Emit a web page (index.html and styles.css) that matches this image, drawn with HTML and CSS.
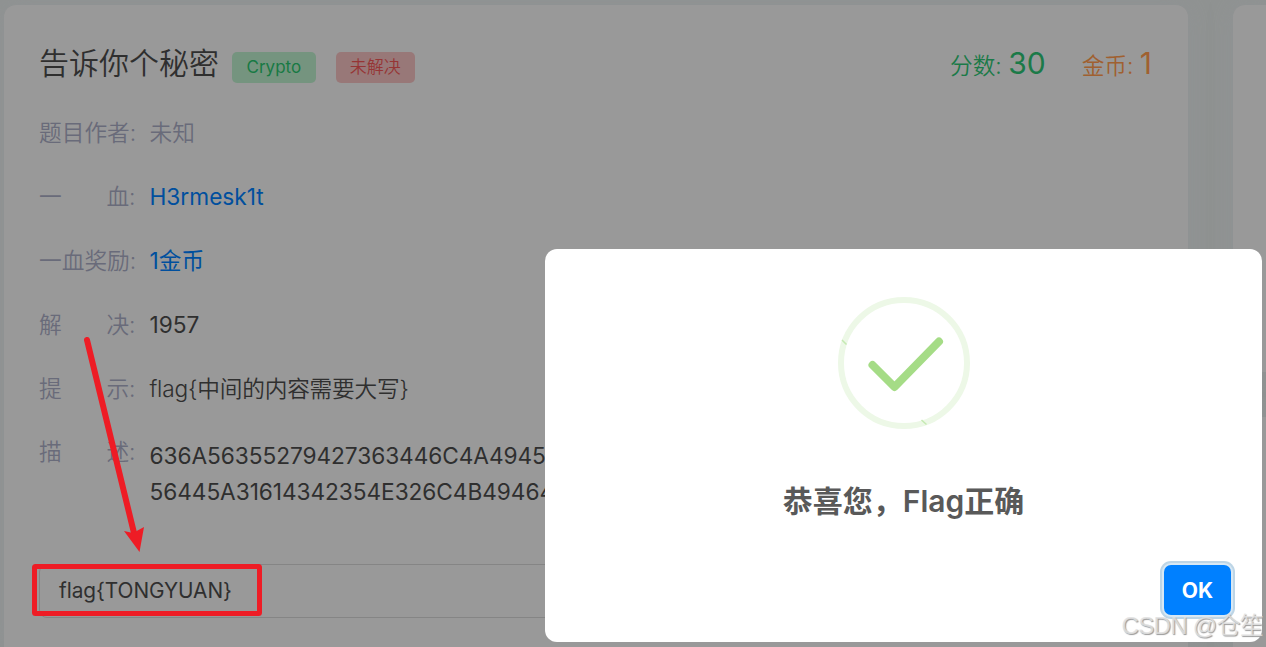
FILE: index.html
```html
<!DOCTYPE html>
<html lang="zh-CN">
<head>
    <meta charset="UTF-8">
    <meta name="viewport" content="width=device-width, initial-scale=1.0">
    <title>告诉你个秘密</title>
    <link rel="stylesheet" href="styles.css">
</head>
<body>
    <div class="page">
        <main class="card challenge">
            <header class="challenge-header">
                <h1 class="title">告诉你个秘密</h1>
                <span class="badge badge-success">Crypto</span>
                <span class="badge badge-danger">未解决</span>
                <div class="scores">
                    <span class="score">分数: <b>30</b></span>
                    <span class="coin">金币: <b>1</b></span>
                </div>
            </header>

            <div class="row"><div class="label"><span>题</span><span>目</span><span>作</span><span>者:</span></div><span class="muted">未知</span></div>
            <div class="row"><div class="label"><span>一</span><span>血:</span></div><a class="link">H3rmesk1t</a></div>
            <div class="row"><div class="label"><span>一</span><span>血</span><span>奖</span><span>励:</span></div><a class="link">1金币</a></div>
            <div class="row"><div class="label"><span>解</span><span>决:</span></div><span class="value">1957</span></div>
            <div class="row"><div class="label"><span>提</span><span>示:</span></div><span class="hint">flag{中间的内容需要大写}</span></div>
            <div class="row row-desc"><div class="label"><span>描</span><span>述:</span></div><p class="desc">636A56355279427363446C4A4945<br>56445A31614342354E326C4B49464</p></div>

            <div class="flag-input">flag{TONGYUAN}</div>
        </main>
        <aside class="side">
            <div class="card side-top"></div>
            <div class="card side-bottom"></div>
        </aside>
    </div>

    <!-- arrow and box marking the flag -->
    <svg class="marks" width="300" height="647" viewBox="0 0 300 647">
        <path d="M87 340L134.500 535" fill="none" stroke="#ee1c25" stroke-width="6" stroke-linecap="round"/>
        <path d="M124 531L133 533L144 527L139.500 552Z" fill="#ee1c25"/>
        <rect x="34.500" y="566.500" width="225" height="47" rx="1" fill="none" stroke="#ee1c25" stroke-width="5"/>
    </svg>

    <div class="modal">
        <svg class="modal-icon" width="132" height="132" viewBox="0 0 132 132">
            <circle cx="66" cy="66" r="63" fill="none" stroke="#edf8e7" stroke-width="6"/>
            <path d="M4 43L8.500 47.500M83.500 123L88.500 127.500" stroke="#c5eab2" stroke-width="1.500"/>
            <path d="M34.500 68L56.500 90L101 44.500" fill="none" stroke="#a5dc86" stroke-width="8" stroke-linecap="round" stroke-linejoin="round"/>
        </svg>
        <div class="modal-title">恭喜您，Flag正确</div>
        <button class="ok-button">OK</button>
    </div>
    <div class="watermark">CSDN @仓笙</div>
</body>
</html>
```

FILE: styles.css
```css
* { box-sizing: border-box; }

body {
    margin: 0;
    height: 647px;
    overflow: hidden;
    position: relative;
    background: #909392;
    color: #2f2f2f;
    font-family: Inter, "Noto Sans CJK SC", sans-serif;
    font-size: 22.7px;
    font-weight: 350;
}

.page {
    display: flex;
    gap: 45px;
    height: 647px;
    padding: 5px 0 0 4px;
}

.card {
    background: #999;
    box-shadow: 0 0 24px rgba(143, 147, 156, 0.35);
}

.challenge {
    flex: none;
    width: 1184px;
    height: 642px;
    padding: 0 35px;
    border-radius: 12px 12px 0 0;
}

.challenge-header {
    display: flex;
    align-items: center;
    height: 96px;
    padding-top: 20px;
}

.title {
    margin: 0 13px 0 0;
    font-size: 30px;
    font-weight: 350;
    line-height: 40px;
}

.badge {
    height: 31px;
    margin: 8px 20px 0 0;
    padding: 0 14px;
    border-radius: 5px;
    font-size: 17px;
    line-height: 31px;
}

.badge-success { padding: 0 14.5px; background: #75947f; color: #187a44; font-weight: 400; }
.badge-danger { background: #987878; color: #963535; }

.scores {
    display: flex;
    gap: 36px;
    margin: 2px 1px 0 auto;
    line-height: 40px;
}

.scores b { font-size: 30px; font-weight: 400; }
.score { color: #1b7a48; }
.coin { color: #a06030; }

.row {
    display: flex;
    align-items: center;
    height: 63.8px;
    padding-top: 1px;
    line-height: 36px;
    white-space: nowrap;
}

.label {
    display: flex;
    justify-content: space-between;
    width: 96.5px;
    margin-right: 14px;
    color: #696b7a;
}

.muted { color: #696b7a; }
.link { color: #004f9e; font-weight: 400; }
.value { font-weight: 400; }
.hint { letter-spacing: -0.2px; }

.row-desc {
    align-items: flex-start;
    height: 115px;
    padding-top: 14px;
}

.desc {
    margin: 4px 0 0;
    font-weight: 400;
    letter-spacing: -0.07px;
}

.flag-input {
    height: 54px;
    margin-top: 29px;
    padding-left: 19px;
    border: 1px solid #858585;
    border-radius: 8px;
    font-size: 20.8px;
    font-weight: 400;
    letter-spacing: -0.05px;
    line-height: 52px;
}

.side { flex: 1; }
.side-top { height: 367px; border-radius: 12px 0 0 12px; }
.side-bottom { height: 230px; margin-top: 45px; border-radius: 12px 0 0 0; }

.marks {
    position: absolute;
    left: 0;
    top: 0;
}

.modal {
    position: absolute;
    left: 545px;
    top: 249px;
    width: 717px;
    height: 393px;
    padding-top: 48px;
    display: flex;
    flex-direction: column;
    align-items: center;
    background: #fff;
    border-radius: 12px;
}

.modal-title {
    margin-top: 49px;
    color: #595959;
    font-size: 30px;
    font-weight: 600;
    line-height: 46px;
}

.ok-button {
    align-self: flex-end;
    width: 67px;
    height: 50px;
    margin: 41px 31px 0 0;
    padding: 0;
    border: 0;
    border-radius: 7px;
    background: #0080ff;
    box-shadow: 0 0 0 2px #d8e8f4, 0 0 0 4px #bdd5e6;
    color: #fff;
    font-family: inherit;
    font-size: 21px;
    font-weight: 700;
}

.watermark {
    position: absolute;
    right: 3px;
    top: 608px;
    color: rgba(225, 225, 225, 0.85);
    font-family: "Liberation Sans", "Noto Sans CJK SC", sans-serif;
    font-size: 24px;
    letter-spacing: -0.7px;
    line-height: 36px;
    text-shadow: 1px 1px 1px #999;
}
```
